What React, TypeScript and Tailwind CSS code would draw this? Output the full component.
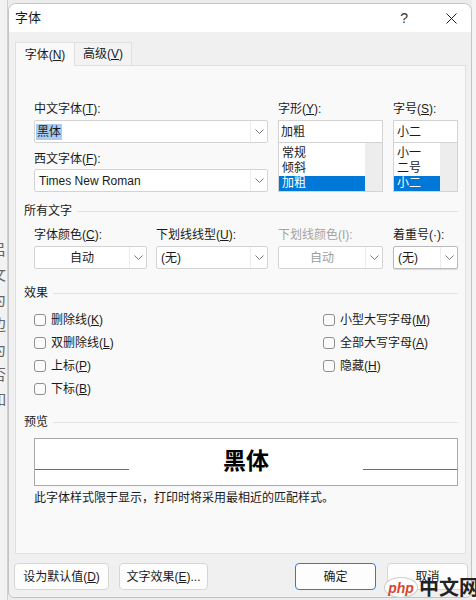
import { ReactNode } from "react"

const FONT = '"Liberation Sans", "Noto Sans CJK SC", sans-serif'

const Chevron = ({ color = "#7a7a7a" }: { color?: string }) => (
  <svg width="9" height="5" viewBox="0 0 9 5" fill="none">
    <path d="M0.5 0.5 L4.5 4.5 L8.5 0.5" stroke={color} strokeWidth="1" />
  </svg>
)

const Label = ({ children, dim }: { children: ReactNode; dim?: boolean }) => (
  <div className={`h-[16px] leading-[16px] text-[12px] whitespace-nowrap ${dim ? "text-[#a3a3a3]" : "text-[#1a1a1a]"}`}>
    {children}
  </div>
)

const Heading = ({ children }: { children: ReactNode }) => (
  <div className="flex items-center h-[16px] text-[12px] text-[#1a1a1a]">
    <span className="whitespace-nowrap">{children}</span>
    <div className="flex-1 h-px bg-[#e2e2e2] ml-[5px]" />
  </div>
)

type DropProps = {
  value: ReactNode
  width: string
  center?: boolean
  dim?: boolean
  dark?: boolean
}

// combobox with a separated chevron button on the right
const Drop = ({ value, width, center, dim, dark }: DropProps) => (
  <div
    className={`${width} h-[23px] flex bg-white border rounded-[2px] ${dark ? "border-[#b9b9b9] shadow-[0_1px_1px_rgba(0,0,0,0.12)]" : "border-[#d3d3d3]"}`}
  >
    <div
      className={`flex-1 flex items-center text-[12px] ${center ? "justify-center" : "pl-[4px]"} ${dim ? "text-[#9c9c9c]" : "text-[#1a1a1a]"}`}
    >
      {value}
    </div>
    <div className="w-[17px] flex items-center justify-center border-l border-[#ececec]">
      <Chevron />
    </div>
  </div>
)

const ListBox = ({ items, selected }: { items: string[]; selected: number }) => (
  <div className="h-[49px] flex bg-white border border-[#d3d3d3] border-t-0">
    <div className="flex-1 pt-[3px]">
      {items.map((it, i) => (
        <div
          key={it}
          className={`h-[15px] leading-[15px] pl-[3px] text-[12px] ${i === selected ? "bg-[#0078d7] text-white" : "text-[#1a1a1a]"}`}
        >
          {it}
        </div>
      ))}
    </div>
    <div className="w-[17px] bg-[#ededed]" />
  </div>
)

const Check = ({ children }: { children: ReactNode }) => (
  <div className="h-[23px] flex items-center">
    <div className="w-[12px] h-[12px] rounded-[3px] border border-[#8f8f8f] bg-[#fbfbfb]" />
    <span className="ml-[5px] text-[12px] text-[#1a1a1a] whitespace-nowrap">{children}</span>
  </div>
)

const Btn = ({ children, width, primary }: { children: ReactNode; width: string; primary?: boolean }) => (
  <div
    className={`${width} h-[27px] flex items-center justify-center rounded-[4px] bg-[#fdfdfd] text-[12px] text-[#1a1a1a] border ${primary ? "border-[#2c7cd2]" : "border-[#d6d6d6]"}`}
  >
    {children}
  </div>
)

export default function App() {
  return (
    <div
      className="w-[476px] h-[600px] bg-[#ececec] flex overflow-hidden relative"
      style={{ fontFamily: FONT }}
    >
      {/* document peeking out on the left */}
      <div className="w-[8px] shrink-0 bg-[#f2f2f2] border-r border-[#cfcfcf] overflow-hidden text-[15px] leading-[25px] text-[#666]">
        <div className="-ml-[9px] pt-[137px]">
          <div>:</div>
          <div className="h-[75px]" />
          <div>吕</div>
          <div>文</div>
          <div>为</div>
          <div>边</div>
          <div>为</div>
          <div>否</div>
          <div>如</div>
        </div>
      </div>

      {/* dialog */}
      <div className="w-[464px] h-[595px] mt-[3px] shrink-0 flex flex-col bg-[#f0f0f0] border border-[#c4c4c4] rounded-t-[8px] rounded-b-[6px] overflow-hidden">
        {/* title bar */}
        <div className="h-[28px] shrink-0 bg-white flex items-center text-[13px] text-[#1a1a1a]">
          <span className="ml-[6px]">字体</span>
          <span className="ml-auto mr-[38px] text-[14px] text-[#333]">?</span>
          <svg className="mr-[14px]" width="11" height="11" viewBox="0 0 11 11">
            <path d="M0.5 0.5 L10.5 10.5 M10.5 0.5 L0.5 10.5" stroke="#222" strokeWidth="1" />
          </svg>
        </div>

        {/* tabs */}
        <div className="flex mt-[9px] ml-[6px] h-[24px] items-end">
          <div className="w-[60px] h-[24px] flex items-center justify-center bg-[#f9f9f9] border border-b-0 border-[#e0e0e0] text-[12px] text-[#1a1a1a] relative top-px">
            字体(<u>N</u>)
          </div>
          <div className="w-[57px] h-[23px] flex items-center justify-center bg-[#f3f3f3] border border-b-0 border-l-0 border-[#e0e0e0] text-[12px] text-[#1a1a1a]">
            高级(<u>V</u>)
          </div>
        </div>

        {/* tab panel */}
        <div className="w-[451px] h-[489px] ml-[6px] bg-[#f9f9f9] border border-[#e0e0e0] pl-[8px] pr-[7px] pt-[35px]">
          {/* fonts row */}
          <div className="flex ml-[10px]">
            <div className="w-[234px]">
              <Label>中文字体(<u>T</u>):</Label>
              <div className="mt-[3px] w-[234px] h-[23px] flex bg-white border border-[#d3d3d3] rounded-[2px]">
                <div className="flex-1 flex items-center pl-[1px]">
                  <span className="bg-[#a8cdf1] text-[12px] text-[#1a1a1a] px-[1px] leading-[16px]">黑体</span>
                </div>
                <div className="w-[17px] flex items-center justify-center border-l border-[#ececec]">
                  <Chevron />
                </div>
              </div>
              <div className="mt-[8px]">
                <Label>西文字体(<u>F</u>):</Label>
              </div>
              <div className="mt-[2px]">
                <Drop width="w-[234px]" value="Times New Roman" />
              </div>
            </div>
            <div className="w-[105px] ml-[10px]">
              <Label>字形(<u>Y</u>):</Label>
              <div className="mt-[3px] h-[23px] bg-white border border-[#d3d3d3] flex items-center pl-[2px] text-[12px] text-[#1a1a1a]">
                加粗
              </div>
              <ListBox items={["常规", "倾斜", "加粗"]} selected={2} />
            </div>
            <div className="w-[65px] ml-[10px]">
              <Label>字号(<u>S</u>):</Label>
              <div className="mt-[3px] h-[23px] bg-white border border-[#d3d3d3] flex items-center pl-[3px] text-[12px] text-[#1a1a1a]">
                小二
              </div>
              <ListBox items={["小一", "二号", "小二"]} selected={2} />
            </div>
          </div>

          {/* all text */}
          <div className="mt-[11px]">
            <Heading>所有文字</Heading>
          </div>
          <div className="flex ml-[10px] mt-[8px]">
            <div className="w-[113px]">
              <Label>字体颜色(<u>C</u>):</Label>
              <div className="mt-[3px]">
                <Drop width="w-[113px]" value="自动" center />
              </div>
            </div>
            <div className="w-[112px] ml-[9px]">
              <Label>下划线线型(<u>U</u>):</Label>
              <div className="mt-[3px]">
                <Drop width="w-[112px]" value="(无)" />
              </div>
            </div>
            <div className="w-[105px] ml-[10px]">
              <Label dim>下划线颜色(I):</Label>
              <div className="mt-[3px]">
                <Drop width="w-[105px]" value="自动" center dim />
              </div>
            </div>
            <div className="w-[65px] ml-[10px]">
              <Label>着重号(·):</Label>
              <div className="mt-[3px]">
                <Drop width="w-[65px]" value="(无)" dark />
              </div>
            </div>
          </div>

          {/* effects */}
          <div className="mt-[16px]">
            <Heading>效果</Heading>
          </div>
          <div className="flex ml-[10px] mt-[7px]">
            <div className="w-[289px]">
              <Check>删除线(<u>K</u>)</Check>
              <Check>双删除线(<u>L</u>)</Check>
              <Check>上标(<u>P</u>)</Check>
              <Check>下标(<u>B</u>)</Check>
            </div>
            <div>
              <Check>小型大写字母(<u>M</u>)</Check>
              <Check>全部大写字母(<u>A</u>)</Check>
              <Check>隐藏(<u>H</u>)</Check>
            </div>
          </div>

          {/* preview */}
          <div className="mt-[14px]">
            <Heading>预览</Heading>
          </div>
          <div className="ml-[10px] mt-[8px] h-[48px] bg-white border border-[#a9a9a9] flex items-center">
            <div className="w-[94px] h-px bg-[#6d6d6d] mt-[15px]" />
            <div className="flex-1 text-center text-[23px] font-bold text-black leading-none -mt-[2px]">黑体</div>
            <div className="w-[94px] h-px bg-[#6d6d6d] mt-[15px]" />
          </div>
          <div className="ml-[10px] mt-[4px] h-[16px] leading-[16px] text-[12px] text-[#1a1a1a]">
            此字体样式限于显示，打印时将采用最相近的匹配样式。
          </div>
        </div>

        {/* buttons */}
        <div className="flex mt-[9px] ml-[5px]">
          <Btn width="w-[95px]">设为默认值(<u>D</u>)</Btn>
          <div className="ml-[10px]">
            <Btn width="w-[89px]">文字效果(<u>E</u>)...</Btn>
          </div>
          <div className="ml-[87px]">
            <Btn width="w-[81px]" primary>确定</Btn>
          </div>
          <div className="ml-[11px]">
            <Btn width="w-[81px]">取消</Btn>
          </div>
        </div>
      </div>

      <div className="w-[4px] shrink-0 bg-[#f4f4f4]" />

      {/* site watermark */}
      <div className="absolute left-[384px] top-[577px] flex items-center whitespace-nowrap">
        <div className="w-[34px] h-[21px] rounded-[50%] bg-white border border-[#ccc] flex items-center justify-center text-[14px] font-bold italic text-[#d9462b] leading-none">
          php
        </div>
        <span className="ml-[1px] text-[20px] font-bold text-[#222] leading-none">中文网</span>
      </div>
    </div>
  )
}
